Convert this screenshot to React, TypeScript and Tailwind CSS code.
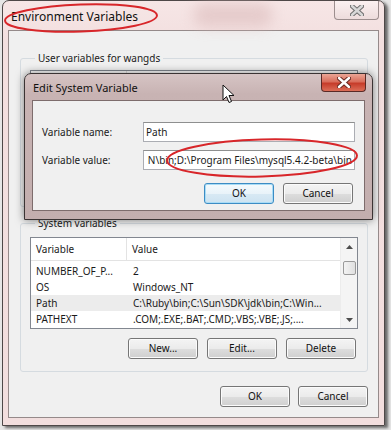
import React from "react";

// Win7 style push button
function WinButton({ label, isDefault = false }: { label: string; isDefault?: boolean }) {
  return (
    <div
      className={
        isDefault
          ? "flex h-[21px] w-[70px] items-center justify-center rounded-[3px] border border-[#3c8cc4] bg-[linear-gradient(#f4fafd_0%,#e9f3f9_50%,#d8e9f4_51%,#cde3f1_100%)] text-[#111] shadow-[inset_0_0_0_1px_#a9dcf6]"
          : "flex h-[21px] w-[70px] items-center justify-center rounded-[3px] border border-[#767676] bg-[linear-gradient(#f4f4f4_0%,#ebebeb_50%,#dddddd_51%,#cfcfcf_100%)] text-[#111] shadow-[inset_0_0_0_1px_#fbfbfb]"
      }
    >
      {label}
    </div>
  );
}

interface VarRow {
  name: string;
  value: string;
  selected?: boolean;
}

const systemRows: VarRow[] = [
  { name: "NUMBER_OF_P...", value: "2" },
  { name: "OS", value: "Windows_NT" },
  { name: "Path", value: "C:\\Ruby\\bin;C:\\Sun\\SDK\\jdk\\bin;C:\\Win...", selected: true },
  { name: "PATHEXT", value: ".COM;.EXE;.BAT;.CMD;.VBS;.VBE;.JS;...." },
];

function Arrow({ down = false }: { down?: boolean }) {
  return (
    <svg width="7" height="4" viewBox="0 0 7 4">
      <path d={down ? "M0 0 L7 0 L3.5 4 Z" : "M0 4 L7 4 L3.5 0 Z"} fill="#4d4d4d" />
    </svg>
  );
}

// List view with header, rows and a vertical scroll bar
function VarList({ rows }: { rows: VarRow[] }) {
  return (
    <div className="flex h-[92px] overflow-hidden border border-[#828790] bg-white">
      <div className="flex min-w-0 flex-1 flex-col">
        <div className="flex h-[23px] shrink-0 items-center border-b border-[#e3e3e3]">
          <div className="flex h-full w-[96px] items-center border-r border-[#e3e3e3] pl-[5px]">
            {rows.length > 0 && "Variable"}
          </div>
          <div className="pl-[5px]">{rows.length > 0 && "Value"}</div>
        </div>
        <div className="flex flex-col pt-[2px]">
          {rows.map((r) => (
            <div
              key={r.name}
              className={`flex h-[16px] shrink-0 items-center whitespace-nowrap ${r.selected ? "bg-[#ececec]" : ""}`}
            >
              <div className="w-[97px] shrink-0 pl-[5px]">{r.name}</div>
              <div className="pl-[5px]">{r.value}</div>
            </div>
          ))}
        </div>
      </div>
      <div className="flex w-[17px] shrink-0 flex-col items-center border-l border-[#ececec] bg-[#f4f4f4]">
        <div className="flex h-[17px] items-center justify-center">
          <Arrow />
        </div>
        <div className="mt-[6px] h-[14px] w-[13px] rounded-[2px] border border-[#9a9a9a] bg-[linear-gradient(90deg,#f3f3f3,#e0e0e0)]" />
        <div className="flex-1" />
        <div className="flex h-[17px] items-center justify-center">
          <Arrow down />
        </div>
      </div>
    </div>
  );
}

// Group box; the user variables one sits under the edit dialog, so its rows and buttons stay empty
function VarGroup({
  title,
  rows,
  showButtons = true,
  className = "",
  listClass = "pt-[6px]",
  buttonsClass = "mt-[11px]",
}: {
  title: string;
  rows: VarRow[];
  showButtons?: boolean;
  className?: string;
  listClass?: string;
  buttonsClass?: string;
}) {
  return (
    <fieldset className={`ml-[11px] mr-[10px] rounded-[3px] border border-[#d5dbe0] px-[9px] pb-[12px] ${className}`}>
      <legend className="ml-[5px] px-[3px] leading-[12px]">{title}</legend>
      <div className={listClass}>
        <VarList rows={rows} />
      </div>
      <div className={`flex h-[21px] justify-end gap-[9px] pr-[2px] ${buttonsClass}`}>
        {showButtons && (
          <>
            <WinButton label="New..." />
            <WinButton label="Edit..." />
            <WinButton label="Delete" />
          </>
        )}
      </div>
    </fieldset>
  );
}

function CloseX({ color, edge }: { color: string; edge: string }) {
  return (
    <svg width="14" height="11" viewBox="0 0 14 11">
      <path d="M2 1 L12 10 M12 1 L2 10" stroke={edge} strokeWidth="4.5" strokeLinecap="round" />
      <path d="M2 1 L12 10 M12 1 L2 10" stroke={color} strokeWidth="2.4" strokeLinecap="round" />
    </svg>
  );
}

function EditDialog() {
  return (
    <div className="absolute left-[24px] top-[73px] flex w-[349px] flex-col rounded-t-[7px] border border-[#3b3434] bg-[linear-gradient(#d6c4c4_0%,#c8b3b3_20px,#c3aeae_100%)] pb-[8px] shadow-[0_0_9px_rgba(0,0,0,0.5)]">
      <div className="flex h-[26px] items-start justify-between pl-[8px] pr-[6px]">
        <div className="pt-[7px] text-[11px] leading-[14px] text-[#111]">Edit System Variable</div>
        <div className="flex h-[18px] w-[45px] items-center justify-center rounded-b-[4px] border border-t-0 border-[#5a2a26] bg-[linear-gradient(#eba595_0%,#d96e5c_45%,#c63c2a_55%,#dc6e58_100%)]">
          <CloseX color="#ffffff" edge="#6a2a22" />
        </div>
      </div>
      <div className="mx-[7px] flex flex-col border border-[#7d6c6c] bg-[#f0f0f0] pb-[6px] pt-[21px]">
        <div className="flex h-[20px] items-center">
          <div className="w-[110px] pl-[9px]">Variable name:</div>
          <div className="flex h-[20px] w-[212px] items-center border border-[#abadb3] border-t-[#8e8f8f] bg-white pl-[2px]">
            Path
          </div>
        </div>
        <div className="mt-[8px] flex h-[20px] items-center">
          <div className="w-[110px] pl-[9px]">Variable value:</div>
          <div className="flex h-[20px] w-[212px] items-center justify-end overflow-hidden whitespace-nowrap border border-[#abadb3] border-t-[#8e8f8f] bg-white pr-[2px]">
            N\bin;D:\Program Files\mysql5.4.2-beta\bin
          </div>
        </div>
        <div className="mt-[13px] flex justify-end gap-[9px] pr-[11px]">
          <WinButton label="OK" isDefault />
          <WinButton label="Cancel" />
        </div>
      </div>
    </div>
  );
}

export default function App() {
  return (
    <div className="relative h-[430px] w-[391px] overflow-hidden bg-[#e6e6e6] pl-[2px] font-['Noto_Sans',sans-serif] text-[10px] text-[#1a1a1a]">
      {/* Environment Variables window */}
      <div className="relative flex w-[383px] flex-col rounded-t-[7px] border border-[#4e4848] bg-[linear-gradient(#f6e6e6_0%,#f3dfdf_40px,#f2dede_100%)] pb-[7px] shadow-[3px_2px_3px_rgba(0,0,0,0.55)]">
        <div className="relative flex h-[29px] items-start justify-between pl-[8px] pr-[5px]">
          <div className="absolute left-[190px] top-[2px] h-[24px] w-[80px] rounded-full bg-[#dcbcbc] opacity-60 blur-[7px]" />
          <div className="relative pt-[8px] text-[12px] leading-[15px] text-[#111]">Environment Variables</div>
          <div className="relative flex h-[19px] w-[45px] items-center justify-center rounded-b-[4px] border border-t-0 border-[#9c8e8e] bg-[linear-gradient(#fbf1f1,#eddcdc)]">
            <CloseX color="#d8d8d8" edge="#6f6f6f" />
          </div>
        </div>
        <div className="mx-[5px] flex flex-col border border-[#958a8a] bg-[#f0f0f0] pb-[10px]">
          <VarGroup title="User variables for wangds" rows={[]} showButtons={false} className="mt-[21px]" />
          <VarGroup
            title="System variables"
            rows={systemRows}
            className="mt-[10px]"
            listClass="pt-[8px]"
            buttonsClass="mt-[9px]"
          />
          <div className="mt-[14px] flex justify-end gap-[8px] pr-[10px]">
            <WinButton label="OK" />
            <WinButton label="Cancel" />
          </div>
        </div>
      </div>

      <EditDialog />

      {/* mouse pointer */}
      <svg className="absolute left-[222px] top-[84px]" width="13" height="20" viewBox="0 0 13 20">
        <path
          d="M1 1 L1 16 L4.5 12.5 L7 18.5 L9.5 17.5 L7 11.5 L12 11.5 Z"
          fill="#ffffff"
          stroke="#111111"
          strokeWidth="1"
          strokeLinejoin="round"
        />
      </svg>

      {/* red annotation rings */}
      <svg className="pointer-events-none absolute left-0 top-0" width="391" height="430" viewBox="0 0 391 430">
        <ellipse cx="81" cy="18" rx="76" ry="13.5" transform="rotate(-2 81 18)" fill="none" stroke="#d8262a" strokeWidth="2" />
        <ellipse cx="262" cy="158" rx="95" ry="18.5" transform="rotate(-1.5 262 158)" fill="none" stroke="#d8262a" strokeWidth="2" />
      </svg>
    </div>
  );
}
